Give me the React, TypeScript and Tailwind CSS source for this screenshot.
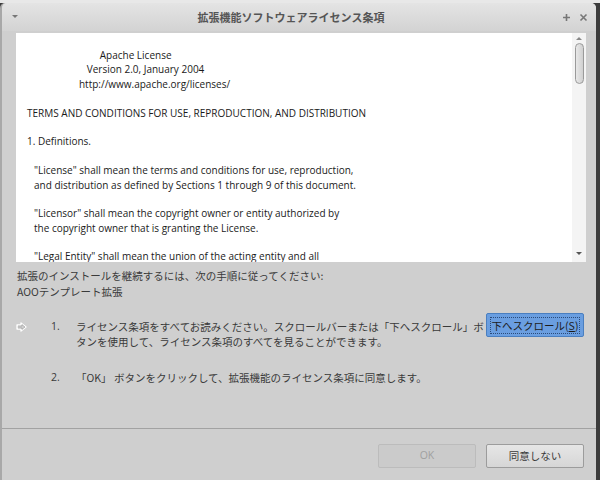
import React from "react";

const sans = { fontFamily: '"Open Sans", "Noto Sans CJK JP", sans-serif' };
const jp = { fontFamily: '"Noto Sans CJK JP", "Open Sans", sans-serif' };

export default function App() {
  const line = "h-[14.4px] leading-[14.4px] whitespace-pre";
  return (
    <div className="w-[600px] h-[480px] bg-[#3c3c3c] overflow-hidden">
      <div className="h-[3px] bg-[#e8e8e8]" />
      <div className="w-[596px] h-[477px] bg-[#cfcfcf] rounded-t-[5px] border-l-2 border-[#a8a8a8] flex flex-col">
        {/* Title bar */}
        <div className="h-[28px] rounded-t-[5px] bg-gradient-to-b from-[#e4e4e4] to-[#d3d3d3] flex items-center px-[8px] text-[#555]">
          <svg width="10" height="10" viewBox="0 0 10 10" className="mt-[-2px]">
            <path d="M2 4 L8 4 L5 7 Z" fill="#777" />
          </svg>
          <div className="flex-1 text-center text-[11px] font-bold text-[#555]" style={jp}>
            拡張機能ソフトウェアライセンス条項
          </div>
          <div className="flex items-center gap-[8px] text-[#777]">
            <svg width="9" height="9" viewBox="0 0 9 9">
              <path d="M4.5 1 V8 M1 4.5 H8" stroke="#777" strokeWidth="1.6" />
            </svg>
            <svg width="9" height="9" viewBox="0 0 9 9">
              <path d="M1.5 1.5 L7.5 7.5 M7.5 1.5 L1.5 7.5" stroke="#777" strokeWidth="1.6" />
            </svg>
          </div>
        </div>

        {/* License text box */}
        <div className="ml-[14px] mt-[2px] w-[570px] h-[229px] bg-white flex text-[10px] text-[#1a1a1a]" style={sans}>
          <div className="flex-1 pl-[11px] pt-[15px] overflow-hidden">
            <div className={line}>{"                            Apache License"}</div>
            <div className={line}>{"                       Version 2.0, January 2004"}</div>
            <div className={line}>{"                    http://www.apache.org/licenses/"}</div>
            <div className={line}>{" "}</div>
            <div className={line}>TERMS AND CONDITIONS FOR USE, REPRODUCTION, AND DISTRIBUTION</div>
            <div className={line}>{" "}</div>
            <div className={line}>1. Definitions.</div>
            <div className={line}>{" "}</div>
            <div className={line + " pl-[7px]"}>"License" shall mean the terms and conditions for use, reproduction,</div>
            <div className={line + " pl-[7px]"}>and distribution as defined by Sections 1 through 9 of this document.</div>
            <div className={line}>{" "}</div>
            <div className={line + " pl-[7px]"}>"Licensor" shall mean the copyright owner or entity authorized by</div>
            <div className={line + " pl-[7px]"}>the copyright owner that is granting the License.</div>
            <div className={line}>{" "}</div>
            <div className={line + " pl-[7px]"}>"Legal Entity" shall mean the union of the acting entity and all</div>
          </div>
          <div className="w-[14px] bg-[#f4f4f4] flex flex-col items-center pt-[3px] pb-[6px]">
            <svg width="6" height="5" viewBox="0 0 6 5">
              <path d="M0 4 L6 4 L3 1 Z" fill="#888" />
            </svg>
            <div className="mt-[2px] w-[9px] h-[41px] rounded-[5px] border border-[#9a9a9a] bg-gradient-to-r from-[#e8e8e8] to-[#d0d0d0]" />
            <div className="flex-1" />
            <svg width="6" height="5" viewBox="0 0 6 5">
              <path d="M0 1 L6 1 L3 4 Z" fill="#555" />
            </svg>
          </div>
        </div>

        {/* Instructions */}
        <div className="pl-[15px] pt-[6px] text-[10.5px] text-[#3a3a3a] leading-[16px]" style={jp}>
          <div>拡張のインストールを継続するには、次の手順に従ってください:</div>
          <div>AOOテンプレート拡張</div>
        </div>

        <div className="flex items-start mt-[19px] text-[10.5px] text-[#3a3a3a] leading-[15px]" style={jp}>
          <div className="w-[49px] pl-[14px] pt-[3px]">
            <svg width="12" height="10" viewBox="0 0 12 10">
              <path d="M1 3 H5 V1 L10 5 L5 9 V7 H1 Z" fill="none" stroke="#fff" strokeWidth="1.3" strokeLinejoin="round" />
              <path d="M2 4 H6 V2.6 L9 5 L6 7.4 V6 H2" fill="none" stroke="#999" strokeWidth="0.6" />
            </svg>
          </div>
          <div className="w-[25px]" style={sans}>1.</div>
          <div className="w-[410px]">
            <div className="whitespace-nowrap">ライセンス条項をすべてお読みください。スクロールバーまたは「下へスクロール」ボ</div>
            <div className="whitespace-nowrap">タンを使用して、ライセンス条項のすべてを見ることができます。</div>
          </div>
          <div className="mt-[-6px] w-[98px] h-[24px] rounded-[2px] border border-[#4a7fc0] bg-[#6a9ee0] flex items-center justify-center">
            <span className="px-[1px] border border-dotted border-[#2b4b7a] text-[#1c1c1c] leading-[15px]">
              下へスクロール(<span className="underline">S</span>)
            </span>
          </div>
        </div>

        <div className="flex items-start mt-[21px] text-[10.5px] text-[#3a3a3a] leading-[15px]" style={jp}>
          <div className="w-[49px]" />
          <div className="w-[25px]" style={sans}>2.</div>
          <div className="whitespace-nowrap">「OK」 ボタンをクリックして、拡張機能のライセンス条項に同意します。</div>
        </div>

        <div className="flex-1" />
        <div className="h-px bg-[#a2a2a2]" />
        <div className="h-[51px] flex items-start justify-end gap-[10px] pr-[12px] pt-[15px] text-[10.5px]" style={jp}>
          <div className="w-[98px] h-[24px] rounded-[2px] border border-[#bcbcbc] bg-[#cbcbcb] flex items-center justify-center text-[#a0a0a0]" style={sans}>
            OK
          </div>
          <div className="w-[98px] h-[24px] rounded-[2px] border border-[#9c9c9c] bg-gradient-to-b from-[#e6e6e6] to-[#d6d6d6] flex items-center justify-center text-[#3a3a3a]">
            同意しない
          </div>
        </div>
      </div>
    </div>
  );
}
